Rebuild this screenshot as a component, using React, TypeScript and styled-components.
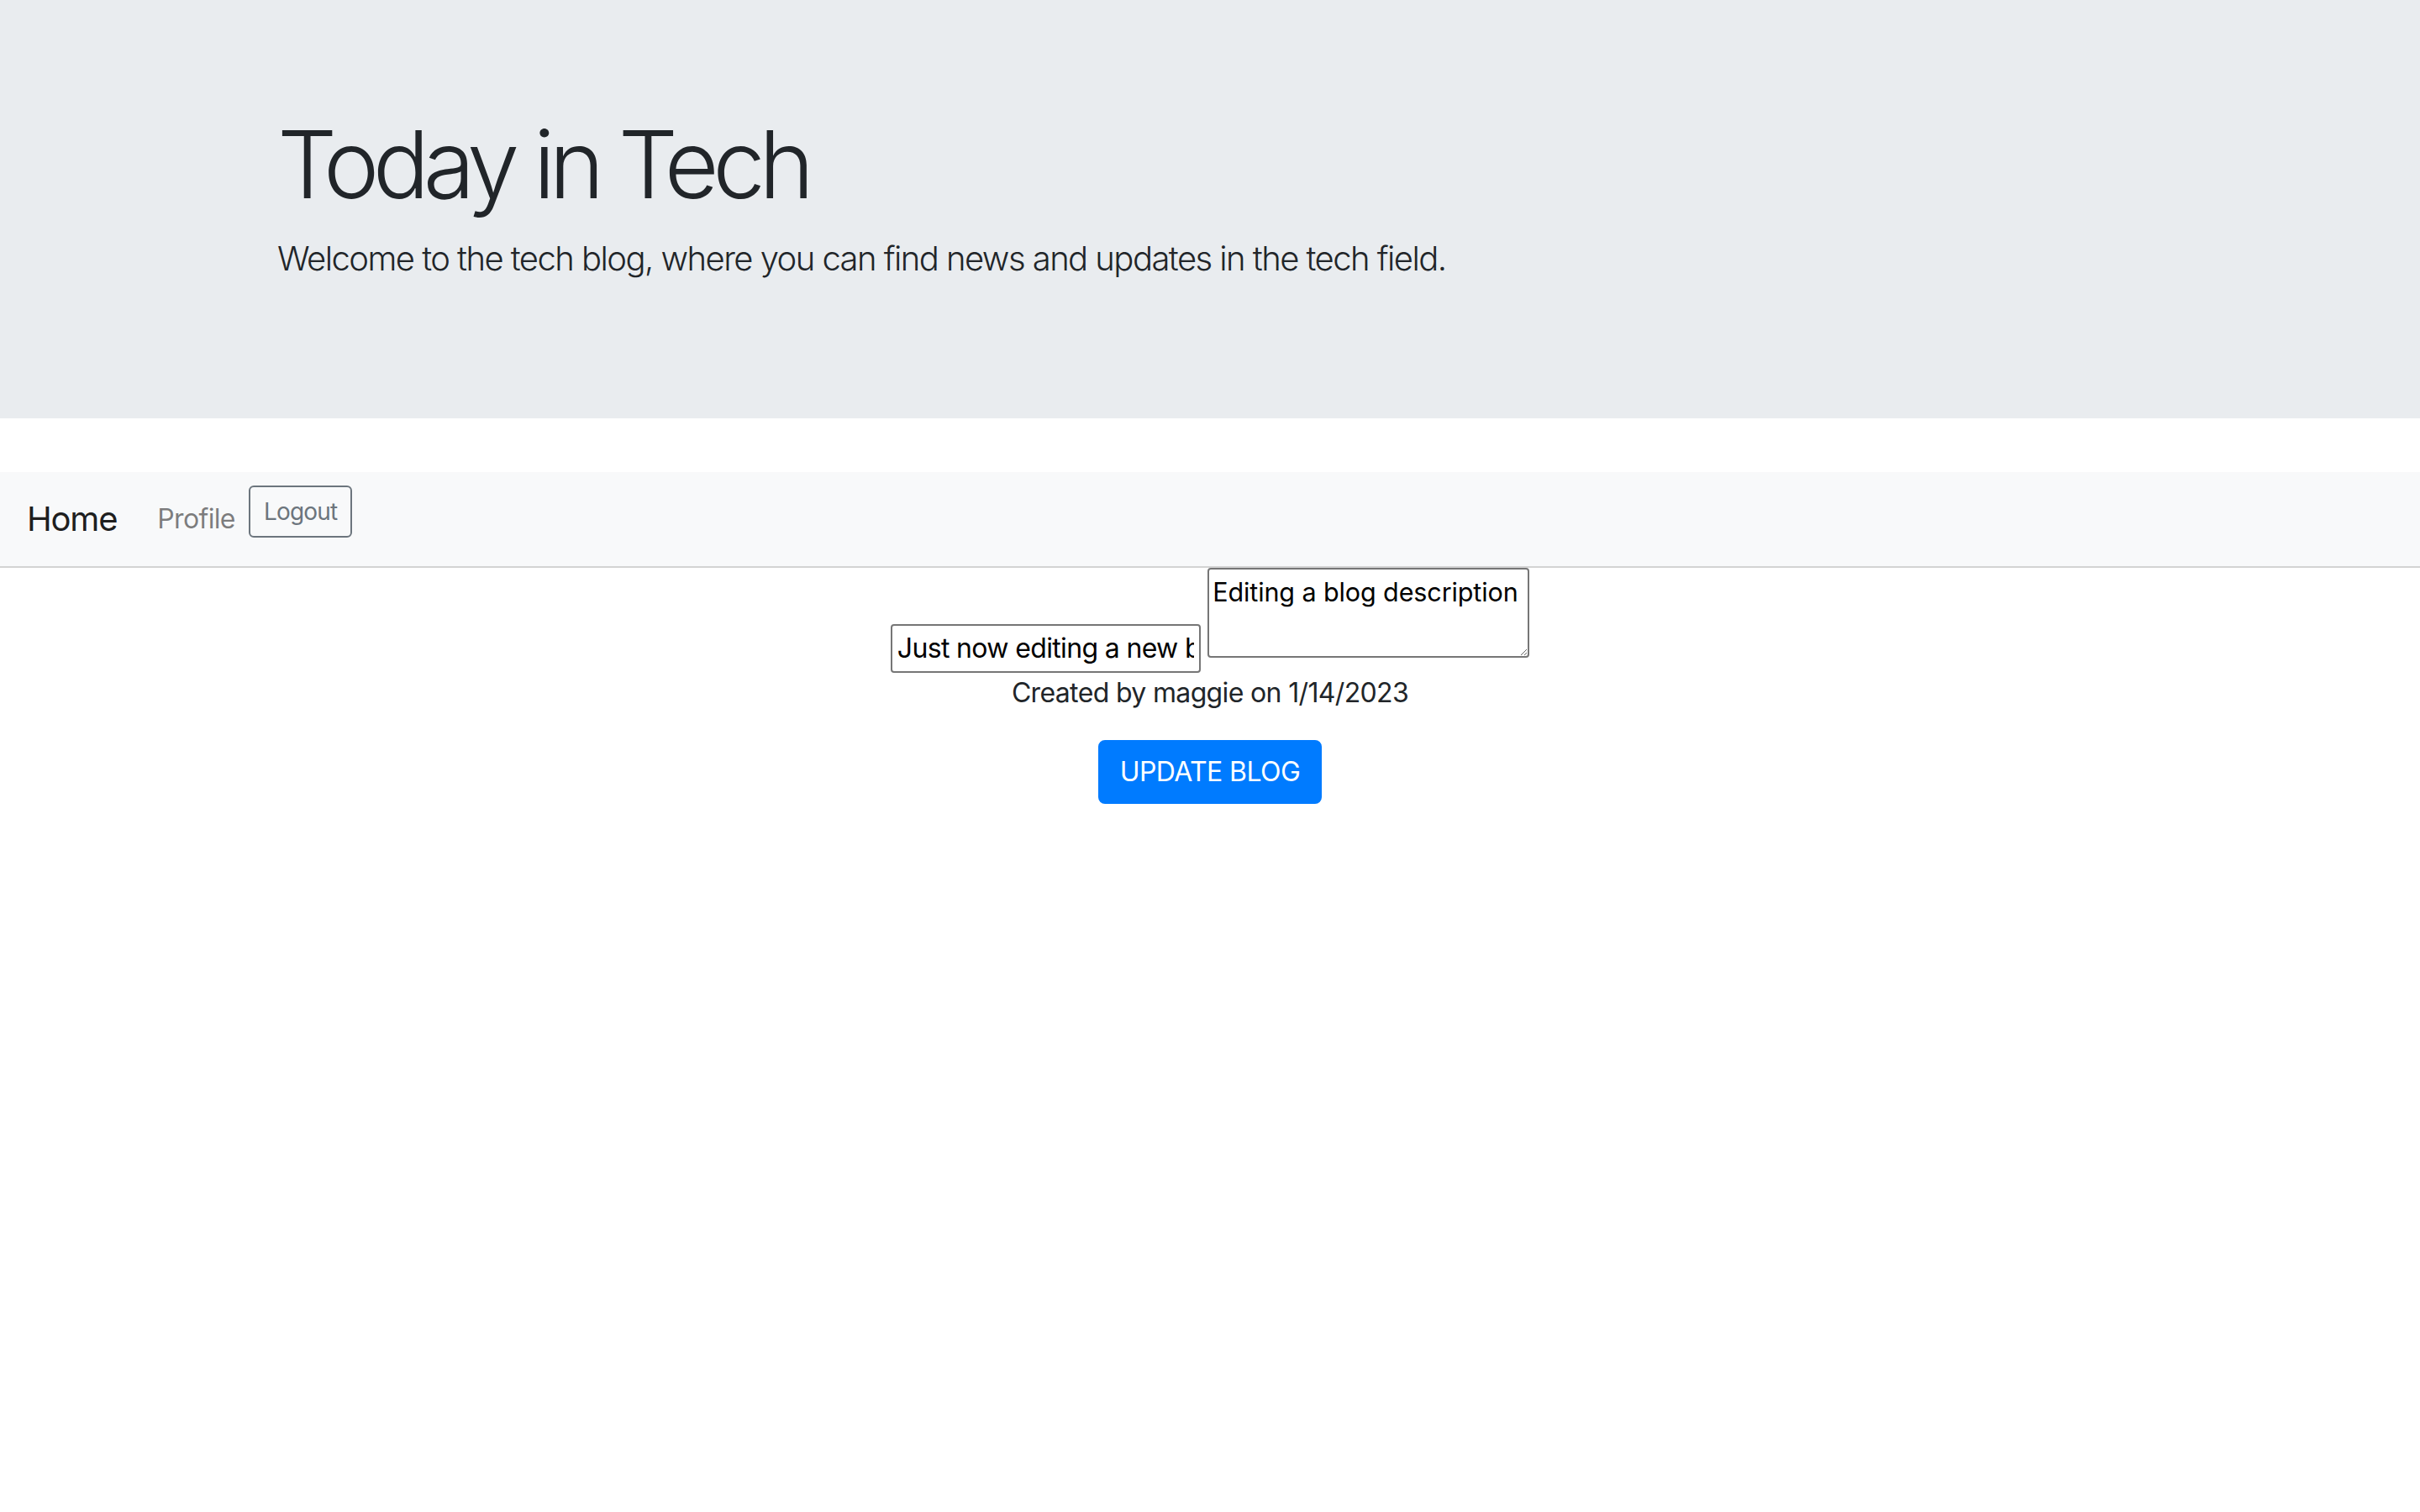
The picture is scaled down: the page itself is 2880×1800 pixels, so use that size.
import React from "react";
import styled, { createGlobalStyle } from "styled-components";

// the screenshot was taken at 2x, so every size below is doubled css px
const GlobalStyle = createGlobalStyle`
  html, body {
    margin: 0;
    padding: 0;
    background: #fff;
  }
  body {
    font-family: "Inter", "Liberation Sans", sans-serif;
    font-size: 32px;
    line-height: 1.5;
    letter-spacing: -0.65px;
    color: #212529;
  }
  *, *::before, *::after {
    box-sizing: border-box;
  }
`;

const Jumbotron = styled.header`
  background-color: #e9ecef;
  padding: 128px 64px;
  margin-bottom: 64px;
`;

const Container = styled.div`
  max-width: 2280px;
  margin: 0 auto;
  padding: 0 30px;
`;

const Title = styled.h1`
  font-size: 112px;
  font-weight: 300;
  line-height: 1.2;
  letter-spacing: -7.5px;
  margin: 0 0 16px;
`;

const Lead = styled.p`
  font-size: 40px;
  font-weight: 300;
  line-height: 1.5;
  letter-spacing: -1.55px;
  margin: 0 0 32px;
`;

const Navbar = styled.nav`
  display: flex;
  align-items: flex-start;
  background-color: #f8f9fa;
  padding: 16px 32px;
  border-bottom: 2px solid #d3d3d3;
`;

const Brand = styled.a`
  font-size: 40px;
  line-height: 60px;
  letter-spacing: -1.2px;
  padding: 10px 0;
  margin-right: 32px;
  color: rgba(0, 0, 0, 0.9);
  text-decoration: none;
`;

const NavLink = styled.a`
  font-size: 32px;
  line-height: 48px;
  padding: 16px;
  color: rgba(0, 0, 0, 0.5);
  text-decoration: none;
`;

const OutlineButton = styled.button`
  font-family: inherit;
  font-size: 28px;
  line-height: 42px;
  letter-spacing: -0.8px;
  padding: 8px 16px;
  border: 2px solid #6c757d;
  border-radius: 6px;
  background: transparent;
  color: #6c757d;
`;

const Editor = styled.main`
  text-align: center;
`;

const TitleInput = styled.input`
  font-family: inherit;
  font-size: 32px;
  letter-spacing: -0.65px;
  width: 369px;
  height: 58px;
  padding: 0 6px;
  margin: 0;
  border: 2px solid #767676;
  border-radius: 4px;
  color: #000;
`;

const DescriptionArea = styled.textarea`
  font-family: inherit;
  font-size: 30.5px;
  letter-spacing: -0.1px;
  width: 383px;
  height: 107px;
  padding: 8px 4px 4px;
  margin: 0;
  border: 2px solid #767676;
  border-radius: 4px;
  color: #000;
`;

const Meta = styled.p`
  margin: 0 0 32px;
`;

const PrimaryButton = styled.button`
  font-family: inherit;
  font-size: 32px;
  line-height: 48px;
  letter-spacing: -0.6px;
  padding: 12px 24px;
  border: 2px solid #007bff;
  border-radius: 8px;
  background-color: #007bff;
  color: #fff;
`;

export default function App() {
  return (
    <>
      <GlobalStyle />
      <Jumbotron>
        <Container>
          <Title>Today in Tech</Title>
          <Lead>Welcome to the tech blog, where you can find news and updates in the tech field.</Lead>
        </Container>
      </Jumbotron>
      <Navbar>
        <Brand href="#">Home</Brand>
        <NavLink href="#">Profile</NavLink>
        <OutlineButton>Logout</OutlineButton>
      </Navbar>
      <Editor>
        <div>
          <TitleInput type="text" defaultValue="Just now editing a new blog" />{" "}
          <DescriptionArea defaultValue="Editing a blog description" />
        </div>
        <Meta>Created by maggie on 1/14/2023</Meta>
        <PrimaryButton>UPDATE BLOG</PrimaryButton>
      </Editor>
    </>
  );
}
